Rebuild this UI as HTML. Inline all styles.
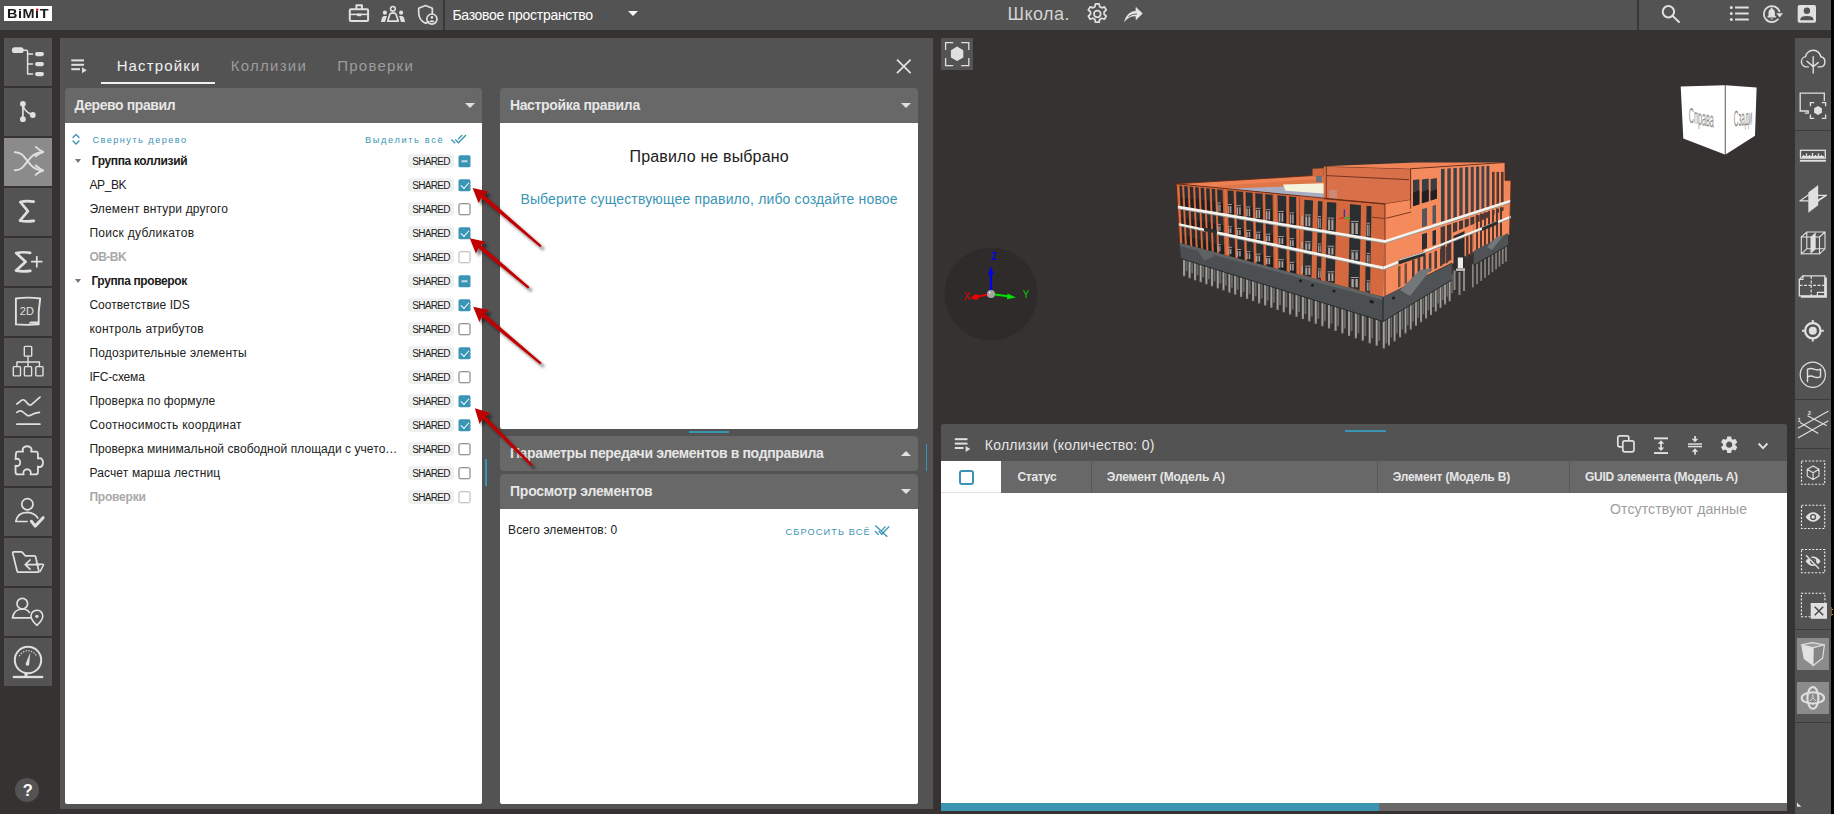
<!DOCTYPE html>
<html lang="ru">
<head>
<meta charset="utf-8">
<title>BIMIT</title>
<style>
*{box-sizing:border-box;margin:0;padding:0}
html,body{width:1834px;height:814px;overflow:hidden}
body{background:#363232;font-family:"Liberation Sans",sans-serif;color:#e0e0e0;position:relative}
.abs{position:absolute}
.t{position:absolute;white-space:nowrap;line-height:20px;left:0;top:0}
svg{position:absolute;overflow:visible}
.ic{fill:none;stroke:#e0e0e0}
.fl{fill:#e0e0e0;stroke:none}
/* top bar */
#topbar{position:absolute;left:0;top:0;width:1834px;height:30px;background:#535353}
#logo{position:absolute;left:4px;top:6px;width:48px;height:15px;background:#fff}
.vdiv{position:absolute;top:0;width:1.5px;height:30px;background:#3a3737}
/* left bar */
#leftbar .b{position:absolute;left:4px;width:48px;height:48px;background:#535353}
#leftbar .b.on{background:#8b8b8b}
#help{position:absolute;left:14.900px;top:777.900px;width:24.200px;height:24.200px;border-radius:12.100px;background:#535353}
/* main panel */
#mainpanel{position:absolute;left:60px;top:38px;width:873px;height:771px;background:#535353}
.acc{position:absolute;background:#686868;border-radius:4px 4px 0 0}
.acc.c{border-radius:4px}
.body{position:absolute;background:#fff;border-radius:0 0 2px 2px}
.caret{position:absolute;width:0;height:0;border-left:5px solid transparent;border-right:5px solid transparent;border-top:5px solid #e0e0e0}
.caret.up{border-top:none;border-bottom:5px solid #e0e0e0}
.row{position:absolute;left:0;width:417px;height:24px}
.badge{position:absolute;left:343px;top:5px;width:46px;height:14px;border-radius:4px;background:#f0f0f0}
.cb{position:absolute;left:393px;top:6px;width:12px;height:12px;transform:translate(.500px,.250px);border-radius:1.600px;border:1.5px solid #757575;background:#fff}
.cb.dis{border-color:#b5b5b5}
.cb.on,.cb.ind{border:none;background:#3a95b5}
.tw{position:absolute;left:9.700px;top:10px;width:0;height:0;border-left:3.5px solid transparent;border-right:3.5px solid transparent;border-top:4px solid #757575}
/* viewer */
#fitbtn{position:absolute;left:941px;top:38px;width:32px;height:32px;background:#535353}
/* bottom panel */
#bottompanel{position:absolute;left:941px;top:424px;width:846px;height:387px;background:#535353;border-radius:3px 3px 0 0}
#thead{position:absolute;left:60px;top:37px;width:786px;height:32px;background:#686868}
.cdiv{position:absolute;top:0;width:1px;height:32px;background:#585858}
/* right bar */
#rightbar{position:absolute;left:1795px;top:38px;width:36px;height:776px;background:#535353}
#rightedge{position:absolute;left:1831.300px;top:0;width:2.700px;height:814px;background:#000}
.hdiv{position:absolute;left:0;width:36px;height:1px;background:#3f3c3c}
.rb{position:absolute;left:2px;width:32px;height:32px;background:#8b8b8b}
.s{font-size:10px;color:#212121}
.th{font-size:12px;font-weight:bold;color:#e6e6e6}
.cb.on::after{content:"";position:absolute;left:3.700px;top:.700px;width:3.600px;height:6.800px;border:solid #fff;border-width:0 1.600px 1.600px 0;transform:rotate(42deg)}
.cb.ind::after{content:"";position:absolute;left:2.700px;top:5.100px;width:6.800px;height:1.700px;background:#c2dbe6}
#tLogo{left:7.40px;top:4.10px;transform-origin:0 0;transform:scaleX(1.0782)}
#tSpace{left:452.40px;top:5.30px;letter-spacing:-0.283px}
#tProj{left:1007.40px;top:4.40px;letter-spacing:0.496px}
#tTab1{left:56.65px;top:17.60px;letter-spacing:1.142px}
#tTab2{left:170.70px;top:17.60px;letter-spacing:1.274px}
#tTab3{left:277.20px;top:17.60px;letter-spacing:1.242px}
#tAcc1{left:14.40px;top:57.00px;letter-spacing:-0.404px}
#tAcc2{left:449.90px;top:57.00px;letter-spacing:-0.333px}
#tAcc3{left:449.90px;top:405.00px;letter-spacing:-0.349px}
#tAcc4{left:450.00px;top:443.25px;letter-spacing:-0.233px}
#tCollapse{left:27.40px;top:6.90px;letter-spacing:1.454px}
#tSelAll{left:300.00px;top:6.90px;letter-spacing:1.643px}
#tNoRule{left:569.60px;top:109.20px;letter-spacing:0.149px}
#tChoose{left:460.40px;top:150.60px;letter-spacing:0.156px}
#tTotal{left:448.10px;top:482.30px;letter-spacing:0.086px}
#tReset{left:725.60px;top:483.90px;letter-spacing:1.112px}
#tColl{left:43.80px;top:11.00px;letter-spacing:0.243px}
#h1{left:76.40px;top:42.60px;letter-spacing:-0.251px}
#h2{left:165.80px;top:42.60px;letter-spacing:-0.152px}
#h3{left:451.70px;top:42.60px;letter-spacing:-0.188px}
#h4{left:644.00px;top:42.60px;letter-spacing:-0.247px}
#tNoData{left:669.00px;top:74.75px;letter-spacing:0.141px}
#tHelp{left:22.80px;top:780.00px;letter-spacing:0.000px}
#r0{left:26.65px;top:2.00px;letter-spacing:-0.355px}
#s0{left:347.30px;top:3.00px;letter-spacing:-0.677px}
#r1{left:24.40px;top:2.00px;letter-spacing:-0.376px}
#s1{left:347.30px;top:3.00px;letter-spacing:-0.677px}
#r2{left:24.40px;top:2.00px;letter-spacing:0.185px}
#s2{left:347.30px;top:3.00px;letter-spacing:-0.677px}
#r3{left:24.40px;top:2.00px;letter-spacing:0.306px}
#s3{left:347.30px;top:3.00px;letter-spacing:-0.677px}
#r4{left:24.40px;top:2.00px;letter-spacing:-0.532px}
#s4{left:347.30px;top:3.00px;letter-spacing:-0.677px}
#r5{left:26.40px;top:2.00px;letter-spacing:-0.377px}
#s5{left:347.30px;top:3.00px;letter-spacing:-0.677px}
#r6{left:24.40px;top:2.00px;letter-spacing:0.045px}
#s6{left:347.30px;top:3.00px;letter-spacing:-0.677px}
#r7{left:24.40px;top:2.00px;letter-spacing:0.238px}
#s7{left:347.30px;top:3.00px;letter-spacing:-0.677px}
#r8{left:24.40px;top:2.00px;letter-spacing:0.199px}
#s8{left:347.30px;top:3.00px;letter-spacing:-0.677px}
#r9{left:24.40px;top:2.00px;letter-spacing:-0.162px}
#s9{left:347.30px;top:3.00px;letter-spacing:-0.677px}
#r10{left:24.40px;top:2.00px;letter-spacing:0.072px}
#s10{left:347.30px;top:3.00px;letter-spacing:-0.677px}
#r11{left:24.40px;top:2.00px;letter-spacing:0.253px}
#s11{left:347.30px;top:3.00px;letter-spacing:-0.677px}
#r12{left:24.40px;top:2.00px;letter-spacing:0.060px}
#s12{left:347.30px;top:3.00px;letter-spacing:-0.677px}
#r13{left:24.40px;top:2.00px;letter-spacing:0.142px}
#s13{left:347.30px;top:3.00px;letter-spacing:-0.677px}
#r14{left:24.40px;top:2.00px;letter-spacing:-0.199px}
#s14{left:347.30px;top:3.00px;letter-spacing:-0.677px}
</style>
</head>
<body>

<!-- ======= TOP BAR ======= -->
<header id="topbar">
  <div id="logo"></div>
  <span class="t" id="tLogo" style="font-size:13.400px;font-weight:bold;color:#1c1c1c;letter-spacing:.500px">BiMiT</span>
  <svg style="left:0;top:0" width="1834" height="30" viewBox="0 0 1834 30">
  <!-- logo red dot -->
  <rect x="36" y="8.700" width="2.300" height="2" fill="#f00000"/>
  <!-- briefcase -->
  <g class="ic" stroke-width="2" stroke-linecap="round" stroke-linejoin="round">
    <rect x="349.8" y="9.2" width="18.3" height="11.7" rx="1.2"/>
    <path d="M356.4 9V5.3h5.5V9"/>
  </g>
  <path d="M350 14.4h18" stroke="#e0e0e0" stroke-width="1.6" fill="none"/>
  <rect x="357" y="13.6" width="4.2" height="2.6" fill="#e0e0e0"/>
  <!-- people -->
  <circle cx="392.900" cy="8.800" r="2.350" class="ic" stroke-width="1.6" stroke-linecap="round" stroke-linejoin="round"/>
  <path d="M387.700 21.100l2.100-6.700q.400-1.300 1.700-1.300h2.900q1.300 0 1.700 1.300l2.100 6.700z" class="ic" stroke-width="1.7" stroke-linecap="round" stroke-linejoin="round"/>
  <circle cx="384.9" cy="12.7" r="2.1" class="fl"/>
  <circle cx="401.1" cy="12.7" r="2.1" class="fl"/>
  <path d="M380.9 21.9l1.2-4.4q.5-1.6 2.2-1.6h2.6l-1.9 6z" class="fl"/>
  <path d="M405.1 21.9l-1.2-4.4q-.5-1.6-2.200-1.600h-2.600l1.900 6z" class="fl"/>
  <!-- shield + person -->
  <path d="M428.700 21.700q-1.700 1-3.300 1.400q-6.700-2.900-6.700-10.600v-4.300l6.800-2.700 6.800 2.700v5.500" class="ic" stroke-width="1.7" stroke-linecap="round" stroke-linejoin="round"/>
  <circle cx="431.900" cy="19.100" r="5.100" class="ic" stroke-width="1.700" stroke-linecap="round" stroke-linejoin="round"/>
  <circle cx="431.900" cy="17.400" r="1.300" class="fl"/>
  <path d="M429.300 21.400q2.600-2.400 5.200 0q-2.600 1.700-5.200 0z" class="fl"/>
  <!-- gear outline -->
  <g transform="translate(1097.300 13.900) scale(1.080)">
    <path class="ic" stroke-width="1.600" d="M-1.700-9.300h3.400l.5 2.600 1.900 1.100 2.500-.9 1.700 2.900-2 1.700v2.200l2 1.700-1.700 2.900-2.500-.9-1.900 1.100-.5 2.600h-3.400l-.5-2.600-1.900-1.100-2.500.9-1.700-2.900 2-1.700v-2.200l-2-1.700 1.700-2.900 2.500.9 1.900-1.100z" stroke-linecap="round" stroke-linejoin="round"/>
    <circle r="3.100" class="ic" stroke-width="1.600" stroke-linecap="round" stroke-linejoin="round"/>
  </g>
  <!-- share arrow -->
  <path d="M1124.600 21.300q2.300-9.300 11.400-10.300v-3.600l6.400 6.100-6.400 6.200v-3.700q-6.700-.6-11.400 5.300z" fill="#e6e6e6" stroke="#e6e6e6" stroke-width=".6" stroke-linejoin="round"/>
  <path d="M1128.500 16.500q3.500-2.700 8.500-2.600" stroke="#535353" stroke-width=".9" fill="none"/>
  <!-- search -->
  <circle cx="1668.400" cy="11.700" r="5.700" class="ic" stroke-width="2" stroke-linecap="round" stroke-linejoin="round"/>
  <path d="M1672.300 15.600l6.700 6.400" class="ic" stroke-width="2" stroke-linecap="round" stroke-linejoin="round"/>
  <!-- list -->
  <g class="fl">
    <circle cx="1731.300" cy="7.600" r="1.500"/><circle cx="1731.300" cy="13.600" r="1.500"/><circle cx="1731.300" cy="19.600" r="1.500"/>
    <rect x="1735" y="6.600" width="13.800" height="2" rx=".5"/><rect x="1735" y="12.600" width="13.800" height="2" rx=".5"/><rect x="1735" y="18.600" width="13.800" height="2" rx=".5"/>
  </g>
  <!-- bell with refresh -->
  <path d="M1779.500 11.500a8 8 0 1 0-1.500 7.800" class="ic" stroke-width="1.700" stroke-linecap="round" stroke-linejoin="round"/>
  <path d="M1776.300 13.300h6.700l-3.300 4.200z" class="fl"/>
  <path d="M1767.500 17.400v-.9l1-1v-3.300q0-2.600 2.300-3.300v-.5a.9.900 0 0 1 1.800 0v.5q2.300.7 2.300 3.300v3.300l1 1v.9z" class="fl"/>
  <path d="M1770.500 18.400h2.400a1.200 1.200 0 0 1-2.400 0z" class="fl"/>
  <!-- account box -->
  <rect x="1797.700" y="5" width="18.300" height="17.800" rx="1.800" class="fl"/>
  <circle cx="1806.900" cy="10.800" r="3.200" fill="#535353"/>
  <path d="M1800.400 20.300v-1q0-3.300 6.500-3.300t6.500 3.300v1z" fill="#535353"/>
</svg>

  <div class="vdiv" style="left:443.3px"></div>
  <span class="t" id="tSpace" style="font-size:14px;color:#fff">Базовое пространство</span>
  <div class="caret" style="left:628.100px;top:11.300px;border-top-color:#f8f8f8"></div>
  <span class="t" id="tProj" style="font-size:18px;color:#d4d4d4">Школа.</span>
  <div class="vdiv" style="left:1637.2px"></div>
</header>

<!-- ======= LEFT BAR ======= -->
<nav id="leftbar">
  <div class="b" style="top:38px"></div>
  <div class="b" style="top:88px"></div>
  <div class="b on" style="top:138px"></div>
  <div class="b" style="top:188px"></div>
  <div class="b" style="top:238px"></div>
  <div class="b" style="top:288px"></div>
  <div class="b" style="top:338px"></div>
  <div class="b" style="top:388px"></div>
  <div class="b" style="top:438px"></div>
  <div class="b" style="top:488px"></div>
  <div class="b" style="top:538px"></div>
  <div class="b" style="top:588px"></div>
  <div class="b" style="top:638px"></div>
  <svg style="left:0;top:0" width="60" height="814" viewBox="0 0 60 814">
  <!-- 1 tree -->
  <rect x="11.900" y="47.300" width="11.800" height="5.800" rx="2.900" class="fl"/>
  <path d="M23 50.200h3.200q1.400 0 1.400 1.400v22.400h5.500M27.600 54h5.500M27.600 64h5.500" class="ic" stroke-width="1.500" stroke-linecap="butt" stroke-linejoin="round"/>
  <rect x="35" y="51.900" width="9" height="4.300" rx="2.100" class="fl"/>
  <rect x="35" y="61.900" width="9" height="4.300" rx="2.100" class="fl"/>
  <rect x="35" y="71.900" width="9" height="4.300" rx="2.100" class="fl"/>
  <!-- 2 branch -->
  <circle cx="22.900" cy="103.800" r="2.900" class="fl"/>
  <circle cx="22.900" cy="119.200" r="2.900" class="fl"/>
  <circle cx="32.800" cy="115" r="2.900" class="fl"/>
  <path d="M22.900 104v15M22.900 104.500q1 7 9.500 10.400" class="ic" stroke-width="1.700" stroke-linecap="round" stroke-linejoin="round"/>
  <!-- 3 shuffle -->
  <g class="ic" stroke-width="1.900" stroke-linecap="round" stroke-linejoin="round">
    <path d="M14.800 152.200c12.500-.5 12 17.800 27.500 18.200M14.800 170.300c12.500.3 12-17.700 27.500-18.100"/>
    <path d="M35.800 146.900q4 3.800 7.400 5.100q-4 .9-7.600 4.200M35.800 165.500q4 3.700 7.400 5q-4 1-7.600 4.400"/>
  </g>
  <!-- 4 sigma -->
  <path d="M33.600 201.700q-7-1.200-13.300.300l7.600 9.200-7.900 9.500q6.500 1.300 13.800.200" class="ic" stroke-width="2.700" stroke-linecap="round" stroke-linejoin="round"/>
  <!-- 5 sigma plus -->
  <path d="M30.200 252.800q-7-1.200-14 .300l9.400 8.700-9.500 8.800q6.500 1.300 14.200.200" class="ic" stroke-width="2.700" stroke-linecap="round" stroke-linejoin="round"/>
  <path d="M31.800 261.700h10M36.800 256.600v10.200" class="ic" stroke-width="1.700" stroke-linecap="round" stroke-linejoin="round"/>
  <!-- 6 2D sheet -->
  <path d="M15.900 298.500q12-1.700 24.300 0q-2.200 13-1.500 25.900q-11 .900-22.800 0z" class="ic" stroke-width="1.900" stroke-linecap="round" stroke-linejoin="round"/>
  <path d="M28.500 323.500q1-2 3-2h6.500v2.500z" class="fl"/>
  <text x="19.800" y="315" font-size="11.500" fill="#e0e0e0" font-family="Liberation Sans, sans-serif" textLength="14" lengthAdjust="spacingAndGlyphs">2D</text>
  <!-- 7 org chart -->
  <g transform="translate(0 -.800)" class="ic" stroke-width="1.400" stroke-linecap="round" stroke-linejoin="round">
    <rect x="24.300" y="347.200" width="7.400" height="9.700" rx=".8"/>
    <rect x="13.300" y="367.400" width="7.200" height="9.300" rx=".8"/>
    <rect x="24.400" y="367.400" width="7.200" height="9.300" rx=".8"/>
    <rect x="35.800" y="367.400" width="7.200" height="9.300" rx=".8"/>
    <path d="M28 357v10.300M16.900 367.300v-4.500h22.500v4.500"/>
  </g>
  <!-- 8 chart -->
  <g class="ic" stroke-width="1.700" stroke-linecap="round" stroke-linejoin="round">
    <path d="M16.900 404l4.800-3.800q1.500-1 3 .2l4 4.200q1.500 1.200 3-.2l8.300-7.300"/>
    <path d="M16.900 412.400q3-2.400 5.500-.8l4.500 3.600q1.500.9 3.200.2q4.500-2.400 9.300-3"/>
    <path d="M16.900 424.200h23"/>
  </g>
  <!-- 9 puzzle -->
  <path transform="translate(29.300 0) scale(.950 1) translate(-29.300 0)" d="M15.200 454q0-2.400 2.400-2.400h5.200q-1.200-2.600.600-4.200q1.600-1.200 3.600-1.200t3.600 1.200q1.800 1.600.600 4.200h4.800q2.400 0 2.400 2.400v4.600q2.600-1.200 4.200.600q1.200 1.600 1.200 3.400t-1.200 3.400q-1.600 1.800-4.200.600v5.400q0 2.400-2.400 2.400h-5.400q1-2.200-.400-3.800q-1.400-1.400-3.200-1.400t-3.200 1.400q-1.400 1.600-.400 3.800h-6.200q-2.400 0-2.400-2.400v-6.400q2.200 1 3.600-.200q1.300-1.200 1.300-3t-1.300-3q-1.400-1.200-3.600-.200z" class="ic" stroke-width="1.900" stroke-linecap="round" stroke-linejoin="round"/>
  <!-- 10 user check -->
  <circle cx="27.400" cy="504.200" r="5.600" class="ic" stroke-width="1.700"/>
  <path d="M27 521.500h-11.200q1.400-9 11.600-9.200q7 .300 10.400 5.700" class="ic" stroke-width="1.700" stroke-linecap="round" stroke-linejoin="round"/>
  <path d="M31.400 521.300l3.800 4.800 7.900-8.400" class="ic" stroke-width="3" stroke-linecap="round" stroke-linejoin="round"/>
  <!-- 11 folder arrow -->
  <path d="M12.700 553.100q-.200-1.200 1-1.200h7.400q.700 0 1.200.500l2.900 3.400h9.200q1 0 1.200 1l3.200 14.200q.200 1.200-1 1.200h-19.200q-1.200 0-1.500-1.200z" class="ic" stroke-width="1.700" stroke-linecap="round" stroke-linejoin="round"/>
  <path d="M35.800 564.200h6.800q1.200 0 .700 1.100l-3.200 6.200" class="ic" stroke-width="1.600" stroke-linecap="round" stroke-linejoin="round"/>
  <path d="M40 564.600h-14.600M30 560l-4.800 4.600 4.800 4.500" class="ic" stroke-width="1.700" stroke-linecap="round" stroke-linejoin="round"/>
  <!-- 12 user location -->
  <circle cx="22.300" cy="603.700" r="5.300" class="ic" stroke-width="1.700"/>
  <path d="M30.500 617.800h-18q1.300-8.600 10.200-8.800q4.200 0 6.700 3.400" class="ic" stroke-width="1.700" stroke-linecap="round" stroke-linejoin="round"/>
  <path d="M36.900 625.300q-5.900-5.300-5.900-9.300q0-2.500 1.700-4.100t4.200-1.700t4.200 1.700t1.700 4.100q0 4-5.900 9.300z" class="ic" stroke-width="1.600" stroke-linejoin="round"/>
  <circle cx="36.900" cy="616.300" r="1.600" class="fl"/>
  <!-- 13 gauge -->
  <circle cx="28" cy="660" r="13.200" class="ic" stroke-width="2"/>
  <path d="M12.800 677h30.400" class="ic" stroke-width="2.300"/>
  <path d="M26 673v4" class="ic" stroke-width="3"/>
  <path d="M19.400 656.200a9.500 9.500 0 0 1 17.200 0" class="ic" stroke-width="1.100" stroke-dasharray="1.400 1.300"/>
  <path d="M30.300 652.400l-1.100 11.800q-.400 1.700-2.100 1.500q-1.700-.500-1.300-2.300z" class="fl"/>
</svg>

  <div id="help"></div>
  <span class="t" id="tHelp" style="font-size:16.500px;font-weight:bold;color:#fff">?</span>
</nav>

<!-- ======= MAIN PANEL ======= -->
<section id="mainpanel">
  <!-- tabs -->
  <span class="t" id="tTab1" style="font-size:15px;color:#f0f0f0">Настройки</span>
  <span class="t" id="tTab2" style="font-size:15px;color:#9c9c9c">Коллизии</span>
  <span class="t" id="tTab3" style="font-size:15px;color:#9c9c9c">Проверки</span>
  <div class="abs" style="left:41px;top:44px;width:114px;height:2px;background:#f0f0f0"></div>
  <svg style="left:0;top:0" width="873" height="60" viewBox="60 38 873 60">
  <!-- menu icon -->
  <g class="fl">
    <rect x="71.300" y="59.400" width="12.700" height="2"/><rect x="71.300" y="63.800" width="12.700" height="2"/><rect x="71.300" y="68.200" width="8.700" height="2"/>
    <path d="M82 67.200l4.700 3-4.700 3z"/>
  </g>
  <!-- close -->
  <path d="M897 59.700l13.600 13.400M910.600 59.700l-13.600 13.400" class="ic" stroke-width="1.800" stroke-linecap="butt" stroke-linejoin="round"/>
</svg>


  <!-- rule tree -->
  <div class="acc" style="left:5px;top:50px;width:417px;height:35px"></div>
  <span class="t" id="tAcc1" style="font-size:14px;font-weight:bold;color:#e6e6e6">Дерево правил</span>
  <div class="caret" style="left:405px;top:65px"></div>
  <div class="body" id="tree" style="left:5px;top:85px;width:417px;height:681px">
    <span class="t" id="tCollapse" style="font-size:9.200px;color:#3a95b5">Свернуть дерево</span>
    <span class="t" id="tSelAll" style="font-size:9.200px;color:#3a95b5">Выделить всё</span>
    <svg style="left:0;top:0" width="417" height="30" viewBox="65 123 417 30">
  <path d="M73 137.600l3-3 3 3M73 141.100l3 3 3-3" fill="none" stroke="#3a95b5" stroke-width="1.400" stroke-linecap="round" stroke-linejoin="round"/>
  <g transform="translate(450.700 130.800) scale(.667 .680)" fill="#3a95b5">
    <path d="M18 7l-1.410-1.410-6.340 6.340 1.410 1.410L18 7zm4.240-1.410L11.660 16.170 7.480 12l-1.410 1.410L11.660 19l12-12-1.420-1.410zM.410 13.410L6 19l1.410-1.410L1.830 12 .410 13.410z"/>
  </g>
</svg>

    <div class="row" style="top:26px"><i class="tw"></i><span class="t" id="r0" style="font-size:12px;font-weight:bold;color:#1a1a1a">Группа коллизий</span><i class="badge"></i><span class="t s" id="s0">SHARED</span><i class="cb ind"></i></div>
    <div class="row" style="top:50px"><span class="t" id="r1" style="font-size:12px;color:#212121">AP_BK</span><i class="badge"></i><span class="t s" id="s1">SHARED</span><i class="cb on"></i></div>
    <div class="row" style="top:74px"><span class="t" id="r2" style="font-size:12px;color:#212121">Элемент внтури другого</span><i class="badge"></i><span class="t s" id="s2">SHARED</span><i class="cb"></i></div>
    <div class="row" style="top:98px"><span class="t" id="r3" style="font-size:12px;color:#212121">Поиск дубликатов</span><i class="badge"></i><span class="t s" id="s3">SHARED</span><i class="cb on"></i></div>
    <div class="row" style="top:122px"><span class="t" id="r4" style="font-size:12px;font-weight:bold;color:#a8a8a8">OB-BK</span><i class="badge"></i><span class="t s" id="s4">SHARED</span><i class="cb dis"></i></div>
    <div class="row" style="top:146px"><i class="tw"></i><span class="t" id="r5" style="font-size:12px;font-weight:bold;color:#1a1a1a">Группа проверок</span><i class="badge"></i><span class="t s" id="s5">SHARED</span><i class="cb ind"></i></div>
    <div class="row" style="top:170px"><span class="t" id="r6" style="font-size:12px;color:#212121">Соответствие IDS</span><i class="badge"></i><span class="t s" id="s6">SHARED</span><i class="cb on"></i></div>
    <div class="row" style="top:194px"><span class="t" id="r7" style="font-size:12px;color:#212121">контроль атрибутов</span><i class="badge"></i><span class="t s" id="s7">SHARED</span><i class="cb"></i></div>
    <div class="row" style="top:218px"><span class="t" id="r8" style="font-size:12px;color:#212121">Подозрительные элементы</span><i class="badge"></i><span class="t s" id="s8">SHARED</span><i class="cb on"></i></div>
    <div class="row" style="top:242px"><span class="t" id="r9" style="font-size:12px;color:#212121">IFC-схема</span><i class="badge"></i><span class="t s" id="s9">SHARED</span><i class="cb"></i></div>
    <div class="row" style="top:266px"><span class="t" id="r10" style="font-size:12px;color:#212121">Проверка по формуле</span><i class="badge"></i><span class="t s" id="s10">SHARED</span><i class="cb on"></i></div>
    <div class="row" style="top:290px"><span class="t" id="r11" style="font-size:12px;color:#212121">Соотносимость координат</span><i class="badge"></i><span class="t s" id="s11">SHARED</span><i class="cb on"></i></div>
    <div class="row" style="top:314px"><span class="t" id="r12" style="font-size:12px;color:#212121">Проверка минимальной свободной площади с учето…</span><i class="badge"></i><span class="t s" id="s12">SHARED</span><i class="cb"></i></div>
    <div class="row" style="top:338px"><span class="t" id="r13" style="font-size:12px;color:#212121">Расчет марша лестниц</span><i class="badge"></i><span class="t s" id="s13">SHARED</span><i class="cb"></i></div>
    <div class="row" style="top:362px"><span class="t" id="r14" style="font-size:12px;font-weight:bold;color:#a8a8a8">Проверки</span><i class="badge"></i><span class="t s" id="s14">SHARED</span><i class="cb dis"></i></div>
  </div>

  <!-- rule settings -->
  <div class="acc" style="left:440px;top:50px;width:418px;height:35px"></div>
  <span class="t" id="tAcc2" style="font-size:14px;font-weight:bold;color:#e6e6e6">Настройка правила</span>
  <div class="caret" style="left:841px;top:65px"></div>
  <div class="body" style="left:440px;top:85px;width:418px;height:306px"></div>
  <span class="t" id="tNoRule" style="font-size:16px;color:#212121">Правило не выбрано</span>
  <span class="t" id="tChoose" style="font-size:14px;color:#3a95b5">Выберите существующее правило, либо создайте новое</span>
  <div class="abs" style="left:629px;top:393px;width:40px;height:2px;background:#3a95b5"></div>
  <div class="abs" style="left:425px;top:421px;width:2px;height:27px;background:#3a95b5"></div>
  <div class="abs" style="left:866.300px;top:406px;width:1.200px;height:27px;background:#3a95b5"></div>

  <div class="acc c" style="left:440px;top:398px;width:418px;height:35px"></div>
  <span class="t" id="tAcc3" style="font-size:14px;font-weight:bold;color:#e6e6e6">Параметры передачи элементов в подправила</span>
  <div class="caret up" style="left:841px;top:413px"></div>

  <div class="acc" style="left:440px;top:436px;width:418px;height:35px"></div>
  <span class="t" id="tAcc4" style="font-size:14px;font-weight:bold;color:#e6e6e6">Просмотр элементов</span>
  <div class="caret" style="left:841px;top:451px"></div>
  <div class="body" style="left:440px;top:471px;width:418px;height:295px"></div>
  <span class="t" id="tTotal" style="font-size:12px;color:#212121">Всего элементов: 0</span>
  <span class="t" id="tReset" style="font-size:9.200px;color:#3a95b5">СБРОСИТЬ ВСЁ</span>
  <svg style="left:0;top:0" width="873" height="771" viewBox="60 38 873 771"><g transform="translate(874.200 522.300) scale(.650 .680)" fill="#3a95b5"><path d="M18 7l-1.410-1.410-6.340 6.340 1.410 1.410L18 7zm4.240-1.410L11.660 16.170 7.480 12l-1.410 1.410L11.660 19l12-12-1.420-1.410zM.410 13.410L6 19l1.410-1.410L1.830 12 .410 13.410z"/></g><path d="M875.300 525.600l12 11.200" stroke="#3a95b5" stroke-width="1.300" fill="none"/></svg>
</section>

<!-- ======= 3D VIEWER ======= -->
<section id="viewer">
  <div id="fitbtn"></div>
  <svg style="left:0;top:0" width="1834" height="430" viewBox="0 0 1834 430">
<g class="ic" stroke-width="1.300"><path d="M945.600 50v-7.400h7.600M961.200 42.600h7.600v7.400M968.800 58v7.600h-7.600M953.200 65.600h-7.600v-7.600"/></g>
<path d="M957.100 46.600l6.200 3.600v7.200l-6.200 3.600-6.200-3.600v-7.200z" class="fl"/>
<circle cx="991" cy="294" r="46.500" fill="#2f2b2b"/>
<path d="M991 294l-19 3.700" stroke="#f00000" stroke-width="1.800"/><circle cx="975.900" cy="296.900" r="2.700" fill="#f00000"/><path d="M970.500 297.900l4-2.400v4z" fill="#f00000"/>
<path d="M991 294l17 2.300" stroke="#00e000" stroke-width="2"/><path d="M1016 297.400l-8.500-3.800-.600 5.600z" fill="#00e000"/>
<path d="M991 294v-20" stroke="#0000f5" stroke-width="2.200"/><path d="M991 266.400l2.900 8h-5.800z" fill="#0000f5"/>
<circle cx="991" cy="294" r="4" fill="#a4a4a4"/><circle cx="989.800" cy="292.600" r=".900" fill="#f5f5e0"/>
<text x="991.500" y="260.400" font-size="10" font-weight="bold" fill="#0000f5" font-family="Liberation Sans, sans-serif" textLength="5" lengthAdjust="spacingAndGlyphs">Z</text>
<text x="1022.700" y="298" font-size="10" fill="#00d000" font-family="Liberation Sans, sans-serif" textLength="6.500" lengthAdjust="spacingAndGlyphs">Y</text>
<text x="964" y="299.500" font-size="10.500" fill="#f00000" font-family="Liberation Sans, sans-serif" textLength="6" lengthAdjust="spacingAndGlyphs">X</text>
<path d="M1680.700 86.600l44.100-1.400v69.200l-41.500-15.800z" fill="#fff"/>
<path d="M1725.600 85.200l31 2.200-1.600 48.400-29.400 18.600z" fill="#fff"/>
<text transform="translate(1688.800 122.600) matrix(.335 .066 0 1 0 0)" font-size="21.500" fill="#8c8c8c" font-family="Liberation Sans, sans-serif">Справа</text>
<text transform="translate(1733.800 126.600) matrix(.285 -.034 0 1 0 0)" font-size="22.500" fill="#8c8c8c" font-family="Liberation Sans, sans-serif">Сзади</text>
<rect x="1185.7" y="253.2" width="1.800" height="18.0" fill="#6a6a68"/>
<rect x="1183.0" y="257.2" width="2.200" height="19.0" fill="#8e8e8a"/>
<rect x="1183.6" y="257.2" width=".800" height="17.0" fill="#adada6"/>
<rect x="1191.2" y="254.9" width="1.800" height="18.3" fill="#6a6a68"/>
<rect x="1188.5" y="258.9" width="2.200" height="19.3" fill="#8e8e8a"/>
<rect x="1189.1" y="258.9" width=".800" height="17.3" fill="#adada6"/>
<rect x="1196.7" y="256.7" width="1.800" height="18.6" fill="#6a6a68"/>
<rect x="1194.0" y="260.7" width="2.200" height="19.6" fill="#8e8e8a"/>
<rect x="1194.6" y="260.7" width=".800" height="17.6" fill="#adada6"/>
<rect x="1202.3" y="258.4" width="1.800" height="18.8" fill="#6a6a68"/>
<rect x="1199.6" y="262.4" width="2.200" height="19.8" fill="#8e8e8a"/>
<rect x="1200.2" y="262.4" width=".800" height="17.8" fill="#adada6"/>
<rect x="1208.0" y="260.2" width="1.800" height="19.1" fill="#6a6a68"/>
<rect x="1205.3" y="264.2" width="2.200" height="20.1" fill="#8e8e8a"/>
<rect x="1205.9" y="264.2" width=".800" height="18.1" fill="#adada6"/>
<rect x="1213.6" y="261.9" width="1.800" height="19.4" fill="#6a6a68"/>
<rect x="1210.9" y="265.9" width="2.200" height="20.4" fill="#8e8e8a"/>
<rect x="1211.5" y="265.9" width=".800" height="18.4" fill="#adada6"/>
<rect x="1219.4" y="263.7" width="1.800" height="19.7" fill="#6a6a68"/>
<rect x="1216.7" y="267.7" width="2.200" height="20.7" fill="#8e8e8a"/>
<rect x="1217.3" y="267.7" width=".800" height="18.7" fill="#adada6"/>
<rect x="1225.1" y="265.5" width="1.800" height="20.0" fill="#6a6a68"/>
<rect x="1222.4" y="269.5" width="2.200" height="21.0" fill="#8e8e8a"/>
<rect x="1223.0" y="269.5" width=".800" height="19.0" fill="#adada6"/>
<rect x="1231.0" y="267.3" width="1.800" height="20.3" fill="#6a6a68"/>
<rect x="1228.3" y="271.3" width="2.200" height="21.3" fill="#8e8e8a"/>
<rect x="1228.9" y="271.3" width=".800" height="19.3" fill="#adada6"/>
<rect x="1236.8" y="269.1" width="1.800" height="20.6" fill="#6a6a68"/>
<rect x="1234.1" y="273.1" width="2.200" height="21.6" fill="#8e8e8a"/>
<rect x="1234.7" y="273.1" width=".800" height="19.6" fill="#adada6"/>
<rect x="1242.7" y="271.0" width="1.800" height="20.9" fill="#6a6a68"/>
<rect x="1240.0" y="275.0" width="2.200" height="21.9" fill="#8e8e8a"/>
<rect x="1240.6" y="275.0" width=".800" height="19.9" fill="#adada6"/>
<rect x="1248.7" y="272.8" width="1.800" height="21.1" fill="#6a6a68"/>
<rect x="1246.0" y="276.8" width="2.200" height="22.1" fill="#8e8e8a"/>
<rect x="1246.6" y="276.8" width=".800" height="20.1" fill="#adada6"/>
<rect x="1254.7" y="274.7" width="1.800" height="21.4" fill="#6a6a68"/>
<rect x="1252.0" y="278.7" width="2.200" height="22.4" fill="#8e8e8a"/>
<rect x="1252.6" y="278.7" width=".800" height="20.4" fill="#adada6"/>
<rect x="1260.7" y="276.6" width="1.800" height="21.8" fill="#6a6a68"/>
<rect x="1258.0" y="280.6" width="2.200" height="22.8" fill="#8e8e8a"/>
<rect x="1258.6" y="280.6" width=".800" height="20.8" fill="#adada6"/>
<rect x="1266.8" y="278.5" width="1.800" height="22.1" fill="#6a6a68"/>
<rect x="1264.1" y="282.5" width="2.200" height="23.1" fill="#8e8e8a"/>
<rect x="1264.7" y="282.5" width=".800" height="21.1" fill="#adada6"/>
<rect x="1273.0" y="280.4" width="1.800" height="22.4" fill="#6a6a68"/>
<rect x="1270.3" y="284.4" width="2.200" height="23.4" fill="#8e8e8a"/>
<rect x="1270.9" y="284.4" width=".800" height="21.4" fill="#adada6"/>
<rect x="1279.2" y="282.3" width="1.800" height="22.7" fill="#6a6a68"/>
<rect x="1276.5" y="286.3" width="2.200" height="23.7" fill="#8e8e8a"/>
<rect x="1277.1" y="286.3" width=".800" height="21.7" fill="#adada6"/>
<rect x="1285.4" y="284.3" width="1.800" height="23.0" fill="#6a6a68"/>
<rect x="1282.7" y="288.3" width="2.200" height="24.0" fill="#8e8e8a"/>
<rect x="1283.3" y="288.3" width=".800" height="22.0" fill="#adada6"/>
<rect x="1291.7" y="286.2" width="1.800" height="23.3" fill="#6a6a68"/>
<rect x="1289.0" y="290.2" width="2.200" height="24.3" fill="#8e8e8a"/>
<rect x="1289.6" y="290.2" width=".800" height="22.3" fill="#adada6"/>
<rect x="1298.1" y="288.2" width="1.800" height="23.6" fill="#6a6a68"/>
<rect x="1295.4" y="292.2" width="2.200" height="24.6" fill="#8e8e8a"/>
<rect x="1296.0" y="292.2" width=".800" height="22.6" fill="#adada6"/>
<rect x="1304.5" y="290.2" width="1.800" height="23.9" fill="#6a6a68"/>
<rect x="1301.8" y="294.2" width="2.200" height="24.9" fill="#8e8e8a"/>
<rect x="1302.4" y="294.2" width=".800" height="22.9" fill="#adada6"/>
<rect x="1310.9" y="292.2" width="1.800" height="24.3" fill="#6a6a68"/>
<rect x="1308.2" y="296.2" width="2.200" height="25.3" fill="#8e8e8a"/>
<rect x="1308.8" y="296.2" width=".800" height="23.3" fill="#adada6"/>
<rect x="1317.4" y="294.2" width="1.800" height="24.6" fill="#6a6a68"/>
<rect x="1314.7" y="298.2" width="2.200" height="25.6" fill="#8e8e8a"/>
<rect x="1315.3" y="298.2" width=".800" height="23.6" fill="#adada6"/>
<rect x="1324.0" y="296.3" width="1.800" height="24.9" fill="#6a6a68"/>
<rect x="1321.3" y="300.3" width="2.200" height="25.9" fill="#8e8e8a"/>
<rect x="1321.9" y="300.3" width=".800" height="23.9" fill="#adada6"/>
<rect x="1330.6" y="298.3" width="1.800" height="25.2" fill="#6a6a68"/>
<rect x="1327.9" y="302.3" width="2.200" height="26.2" fill="#8e8e8a"/>
<rect x="1328.5" y="302.3" width=".800" height="24.2" fill="#adada6"/>
<rect x="1337.2" y="300.4" width="1.800" height="25.6" fill="#6a6a68"/>
<rect x="1334.5" y="304.4" width="2.200" height="26.6" fill="#8e8e8a"/>
<rect x="1335.1" y="304.4" width=".800" height="24.6" fill="#adada6"/>
<rect x="1344.0" y="302.5" width="1.800" height="25.9" fill="#6a6a68"/>
<rect x="1341.3" y="306.5" width="2.200" height="26.9" fill="#8e8e8a"/>
<rect x="1341.9" y="306.5" width=".800" height="24.9" fill="#adada6"/>
<rect x="1350.7" y="304.6" width="1.800" height="26.3" fill="#6a6a68"/>
<rect x="1348.0" y="308.6" width="2.200" height="27.3" fill="#8e8e8a"/>
<rect x="1348.6" y="308.6" width=".800" height="25.3" fill="#adada6"/>
<rect x="1357.5" y="306.7" width="1.800" height="26.6" fill="#6a6a68"/>
<rect x="1354.8" y="310.7" width="2.200" height="27.6" fill="#8e8e8a"/>
<rect x="1355.4" y="310.7" width=".800" height="25.6" fill="#adada6"/>
<rect x="1364.4" y="308.9" width="1.800" height="26.9" fill="#6a6a68"/>
<rect x="1361.7" y="312.9" width="2.200" height="27.9" fill="#8e8e8a"/>
<rect x="1362.3" y="312.9" width=".800" height="25.9" fill="#adada6"/>
<rect x="1371.3" y="311.0" width="1.800" height="27.3" fill="#6a6a68"/>
<rect x="1368.6" y="315.0" width="2.200" height="28.3" fill="#8e8e8a"/>
<rect x="1369.2" y="315.0" width=".800" height="26.3" fill="#adada6"/>
<rect x="1378.3" y="313.2" width="1.800" height="27.6" fill="#6a6a68"/>
<rect x="1375.6" y="317.2" width="2.200" height="28.6" fill="#8e8e8a"/>
<rect x="1376.2" y="317.2" width=".800" height="26.6" fill="#adada6"/>
<rect x="1385.4" y="315.4" width="1.800" height="28.0" fill="#6a6a68"/>
<rect x="1382.7" y="319.4" width="2.200" height="29.0" fill="#8e8e8a"/>
<rect x="1383.3" y="319.4" width=".800" height="27.0" fill="#adada6"/>
<rect x="1390.5" y="310.5" width="1.600" height="27.0" fill="#6a6a68"/>
<rect x="1388.0" y="316.5" width="2" height="29.0" fill="#8e8e8a"/>
<rect x="1388.5" y="316.5" width=".700" height="27.0" fill="#adada6"/>
<rect x="1396.1" y="307.1" width="1.600" height="26.3" fill="#6a6a68"/>
<rect x="1393.6" y="313.1" width="2" height="28.3" fill="#8e8e8a"/>
<rect x="1394.1" y="313.1" width=".700" height="26.3" fill="#adada6"/>
<rect x="1401.6" y="303.8" width="1.600" height="25.6" fill="#6a6a68"/>
<rect x="1399.1" y="309.8" width="2" height="27.6" fill="#8e8e8a"/>
<rect x="1399.6" y="309.8" width=".700" height="25.6" fill="#adada6"/>
<rect x="1407.0" y="300.5" width="1.600" height="24.9" fill="#6a6a68"/>
<rect x="1404.5" y="306.5" width="2" height="26.9" fill="#8e8e8a"/>
<rect x="1405.0" y="306.5" width=".700" height="24.9" fill="#adada6"/>
<rect x="1412.3" y="297.3" width="1.600" height="24.3" fill="#6a6a68"/>
<rect x="1409.8" y="303.3" width="2" height="26.3" fill="#8e8e8a"/>
<rect x="1410.3" y="303.3" width=".700" height="24.3" fill="#adada6"/>
<rect x="1417.5" y="294.2" width="1.600" height="23.6" fill="#6a6a68"/>
<rect x="1415.0" y="300.2" width="2" height="25.6" fill="#8e8e8a"/>
<rect x="1415.5" y="300.2" width=".700" height="23.6" fill="#adada6"/>
<rect x="1422.6" y="291.1" width="1.600" height="23.0" fill="#6a6a68"/>
<rect x="1420.1" y="297.1" width="2" height="25.0" fill="#8e8e8a"/>
<rect x="1420.6" y="297.1" width=".700" height="23.0" fill="#adada6"/>
<rect x="1427.6" y="288.1" width="1.600" height="22.4" fill="#6a6a68"/>
<rect x="1425.1" y="294.1" width="2" height="24.4" fill="#8e8e8a"/>
<rect x="1425.6" y="294.1" width=".700" height="22.4" fill="#adada6"/>
<rect x="1432.5" y="285.2" width="1.600" height="21.8" fill="#6a6a68"/>
<rect x="1430.0" y="291.2" width="2" height="23.8" fill="#8e8e8a"/>
<rect x="1430.5" y="291.2" width=".700" height="21.8" fill="#adada6"/>
<rect x="1437.3" y="282.3" width="1.600" height="21.2" fill="#6a6a68"/>
<rect x="1434.8" y="288.3" width="2" height="23.2" fill="#8e8e8a"/>
<rect x="1435.3" y="288.3" width=".700" height="21.2" fill="#adada6"/>
<rect x="1442.0" y="279.4" width="1.600" height="20.6" fill="#6a6a68"/>
<rect x="1439.5" y="285.4" width="2" height="22.6" fill="#8e8e8a"/>
<rect x="1440.0" y="285.4" width=".700" height="20.6" fill="#adada6"/>
<rect x="1446.6" y="276.6" width="1.600" height="20.0" fill="#6a6a68"/>
<rect x="1444.1" y="282.6" width="2" height="22.0" fill="#8e8e8a"/>
<rect x="1444.6" y="282.6" width=".700" height="20.0" fill="#adada6"/>
<rect x="1451.2" y="273.9" width="1.600" height="19.4" fill="#6a6a68"/>
<rect x="1448.7" y="279.9" width="2" height="21.4" fill="#8e8e8a"/>
<rect x="1449.2" y="279.9" width=".700" height="19.4" fill="#adada6"/>
<rect x="1453.5" y="268.0" width="2" height="22.0" fill="#8a8a85"/>
<rect x="1458.5" y="272.0" width="2" height="23.0" fill="#8a8a85"/>
<rect x="1463.0" y="268.0" width="2" height="23.0" fill="#8a8a85"/>
<rect x="1472.0" y="264.3" width="1.700" height="23.0" fill="#85857f"/>
<rect x="1476.2" y="261.9" width="1.700" height="22.2" fill="#85857f"/>
<rect x="1480.3" y="259.5" width="1.700" height="21.4" fill="#85857f"/>
<rect x="1484.2" y="257.2" width="1.700" height="20.6" fill="#85857f"/>
<rect x="1488.0" y="255.0" width="1.700" height="19.9" fill="#85857f"/>
<rect x="1491.6" y="252.9" width="1.700" height="19.2" fill="#85857f"/>
<rect x="1495.2" y="250.8" width="1.700" height="18.5" fill="#85857f"/>
<rect x="1498.6" y="248.8" width="1.700" height="17.8" fill="#85857f"/>
<rect x="1501.9" y="246.8" width="1.700" height="17.2" fill="#85857f"/>
<rect x="1505.1" y="245.0" width="1.700" height="16.6" fill="#85857f"/>
<polygon points="1176.0,183.8 1312.5,175.6 1323.7,176.0 1323.7,199.0" fill="#ee8154"/>
<polygon points="1205.0,186.7 1312.0,179.5 1323.7,181.0 1323.7,199.0" fill="#df7648"/>
<polygon points="1228.0,188.8 1285.0,186.6 1323.7,190.5 1323.7,198.4" fill="#a9adc2"/>
<polygon points="1283.0,184.6 1323.7,183.2 1323.7,193.6 1285.5,190.8" fill="#f6f3dd"/>
<polygon points="1312.5,168.8 1323.7,168.3 1323.7,177.0 1312.5,176.5" fill="#d4693f"/>
<rect x="1316" y="176" width="6" height="6" fill="#6b7280"/>
<polygon points="1176.0,183.8 1300.0,195.8 1300.0,275.0 1179.7,243.0" fill="#2b2e31"/>
<polygon points="1300.0,195.8 1385.0,204.0 1383.0,297.0 1300.0,275.0" fill="#d4693f"/>
<polygon points="1176.0,183.8 1300.0,195.8 1300.0,197.4 1176.0,185.2" fill="#d4693f"/>
<polygon points="1179.0,196.8 1300.0,213.1 1300.0,227.2 1179.0,207.1" fill="#1d1f22"/>
<polygon points="1179.0,216.8 1300.0,239.9 1300.0,250.3 1179.0,224.6" fill="#1d1f22"/>
<polygon points="1179.0,234.6 1300.0,263.9 1300.0,275.0 1179.0,242.8" fill="#1d1f22"/>
<polygon points="1176.5,183.8 1179.5,184.1 1182.4,243.7 1179.4,242.9" fill="#c65c33"/>
<polygon points="1177.4,183.8 1178.8,184.1 1181.7,243.7 1180.3,242.9" fill="#dd7246"/>
<polygon points="1182.0,184.4 1184.1,184.6 1186.9,244.9 1184.8,244.4" fill="#c65c33"/>
<polygon points="1182.6,184.4 1183.6,184.6 1186.4,244.9 1185.5,244.4" fill="#dd7246"/>
<polygon points="1187.5,184.9 1189.6,185.1 1192.3,246.3 1190.2,245.8" fill="#c65c33"/>
<polygon points="1188.1,184.9 1189.1,185.1 1191.8,246.3 1190.8,245.8" fill="#dd7246"/>
<polygon points="1193.0,185.4 1195.1,185.6 1197.7,247.8 1195.6,247.2" fill="#c65c33"/>
<polygon points="1193.6,185.4 1194.6,185.6 1197.2,247.8 1196.2,247.2" fill="#dd7246"/>
<polygon points="1198.5,186.0 1200.6,186.2 1203.1,249.2 1201.0,248.6" fill="#c65c33"/>
<polygon points="1199.1,186.0 1200.1,186.2 1202.5,249.2 1201.6,248.6" fill="#dd7246"/>
<polygon points="1204.0,186.5 1206.1,186.7 1208.4,250.6 1206.3,250.1" fill="#c65c33"/>
<polygon points="1204.6,186.5 1205.6,186.7 1207.9,250.6 1207.0,250.1" fill="#dd7246"/>
<polygon points="1209.5,187.0 1211.6,187.2 1213.8,252.1 1211.7,251.5" fill="#c65c33"/>
<polygon points="1210.1,187.0 1211.1,187.2 1213.3,252.1 1212.4,251.5" fill="#dd7246"/>
<polygon points="1215.0,187.6 1217.1,187.8 1219.2,253.5 1217.1,252.9" fill="#c65c33"/>
<polygon points="1215.6,187.6 1216.6,187.8 1218.7,253.5 1217.7,252.9" fill="#dd7246"/>
<polygon points="1222.5,188.3 1227.7,188.8 1229.6,256.3 1224.4,254.9" fill="#c65c33"/>
<polygon points="1224.1,188.3 1226.4,188.8 1228.3,256.3 1226.0,254.9" fill="#dd7246"/>
<polygon points="1233.5,189.4 1236.1,189.6 1237.8,258.4 1235.2,257.7" fill="#c65c33"/>
<polygon points="1234.3,189.4 1235.5,189.6 1237.2,258.4 1236.0,257.7" fill="#dd7246"/>
<polygon points="1243.0,190.3 1245.6,190.5 1247.1,260.9 1244.5,260.2" fill="#c65c33"/>
<polygon points="1243.8,190.3 1245.0,190.5 1246.4,260.9 1245.3,260.2" fill="#dd7246"/>
<polygon points="1252.5,191.2 1255.3,191.5 1256.6,263.4 1253.8,262.7" fill="#c65c33"/>
<polygon points="1253.3,191.2 1254.6,191.5 1255.9,263.4 1254.6,262.7" fill="#dd7246"/>
<polygon points="1262.5,192.2 1265.3,192.4 1266.4,266.0 1263.6,265.3" fill="#c65c33"/>
<polygon points="1263.3,192.2 1264.6,192.4 1265.7,266.0 1264.4,265.3" fill="#dd7246"/>
<polygon points="1272.5,193.1 1277.7,193.6 1278.6,269.3 1273.4,267.9" fill="#c65c33"/>
<polygon points="1274.1,193.1 1276.4,193.6 1277.3,269.3 1274.9,267.9" fill="#dd7246"/>
<polygon points="1286.0,194.4 1289.2,194.7 1289.8,272.2 1286.6,271.4" fill="#c65c33"/>
<polygon points="1287.0,194.4 1288.4,194.7 1289.0,272.2 1287.5,271.4" fill="#dd7246"/>
<polygon points="1296.0,195.4 1299.6,195.7 1299.9,274.9 1296.3,274.0" fill="#c65c33"/>
<polygon points="1297.1,195.4 1298.7,195.7 1299.0,274.9 1297.4,274.0" fill="#dd7246"/>
<polygon points="1304.4,199.7 1313.0,200.5 1311.5,277.4 1302.9,275.1" fill="#2b2e31"/>
<polygon points="1318.0,201.0 1322.5,201.5 1321.0,279.9 1316.5,278.7" fill="#2b2e31"/>
<polygon points="1327.0,201.9 1336.3,202.8 1334.8,283.6 1325.5,281.1" fill="#2b2e31"/>
<polygon points="1350.0,204.1 1361.0,205.2 1359.5,290.2 1348.5,287.2" fill="#2b2e31"/>
<polygon points="1366.6,205.7 1371.5,206.2 1370.0,292.9 1365.1,291.6" fill="#2b2e31"/>
<rect x="1217.4" y="204.5" width="1.2" height="7.0" fill="#ac9f9c"/>
<rect x="1219.3" y="204.5" width="1.2" height="7.0" fill="#ac9f9c"/>
<rect x="1217.1" y="202.5" width="3.8" height="1" fill="#a79c9a"/>
<rect x="1217.4" y="226.2" width="1.2" height="4.6" fill="#ac9f9c"/>
<rect x="1219.3" y="226.2" width="1.2" height="4.6" fill="#ac9f9c"/>
<rect x="1217.1" y="224.2" width="3.8" height="1" fill="#a79c9a"/>
<rect x="1217.4" y="246.2" width="1.2" height="5.1" fill="#ac9f9c"/>
<rect x="1219.3" y="246.2" width="1.2" height="5.1" fill="#ac9f9c"/>
<rect x="1217.1" y="244.2" width="3.8" height="1" fill="#a79c9a"/>
<rect x="1228.1" y="206.0" width="1.3" height="7.3" fill="#ac9f9c"/>
<rect x="1230.1" y="206.0" width="1.3" height="7.3" fill="#ac9f9c"/>
<rect x="1227.8" y="204.0" width="4.1" height="1" fill="#a79c9a"/>
<rect x="1228.1" y="228.3" width="1.3" height="4.8" fill="#ac9f9c"/>
<rect x="1230.1" y="228.3" width="1.3" height="4.8" fill="#ac9f9c"/>
<rect x="1227.8" y="226.3" width="4.1" height="1" fill="#a79c9a"/>
<rect x="1228.1" y="248.8" width="1.3" height="5.3" fill="#ac9f9c"/>
<rect x="1230.1" y="248.8" width="1.3" height="5.3" fill="#ac9f9c"/>
<rect x="1227.8" y="246.8" width="4.1" height="1" fill="#a79c9a"/>
<rect x="1236.7" y="207.2" width="1.5" height="7.6" fill="#ac9f9c"/>
<rect x="1239.2" y="207.2" width="1.5" height="7.6" fill="#ac9f9c"/>
<rect x="1236.3" y="205.2" width="4.8" height="1" fill="#a79c9a"/>
<rect x="1236.7" y="230.0" width="1.5" height="5.0" fill="#ac9f9c"/>
<rect x="1239.2" y="230.0" width="1.5" height="5.0" fill="#ac9f9c"/>
<rect x="1236.3" y="228.0" width="4.8" height="1" fill="#a79c9a"/>
<rect x="1236.7" y="251.0" width="1.5" height="5.5" fill="#ac9f9c"/>
<rect x="1239.2" y="251.0" width="1.5" height="5.5" fill="#ac9f9c"/>
<rect x="1236.3" y="249.0" width="4.8" height="1" fill="#a79c9a"/>
<rect x="1246.2" y="208.5" width="1.5" height="7.9" fill="#ac9f9c"/>
<rect x="1248.7" y="208.5" width="1.5" height="7.9" fill="#ac9f9c"/>
<rect x="1245.8" y="206.5" width="4.8" height="1" fill="#a79c9a"/>
<rect x="1246.2" y="231.9" width="1.5" height="5.2" fill="#ac9f9c"/>
<rect x="1248.7" y="231.9" width="1.5" height="5.2" fill="#ac9f9c"/>
<rect x="1245.8" y="229.9" width="4.8" height="1" fill="#a79c9a"/>
<rect x="1246.2" y="253.3" width="1.5" height="5.8" fill="#ac9f9c"/>
<rect x="1248.7" y="253.3" width="1.5" height="5.8" fill="#ac9f9c"/>
<rect x="1245.8" y="251.3" width="4.8" height="1" fill="#a79c9a"/>
<rect x="1255.9" y="209.8" width="1.6" height="8.2" fill="#ac9f9c"/>
<rect x="1258.5" y="209.8" width="1.6" height="8.2" fill="#ac9f9c"/>
<rect x="1255.6" y="207.8" width="5.0" height="1" fill="#a79c9a"/>
<rect x="1255.9" y="233.7" width="1.6" height="5.4" fill="#ac9f9c"/>
<rect x="1258.5" y="233.7" width="1.6" height="5.4" fill="#ac9f9c"/>
<rect x="1255.6" y="231.7" width="5.0" height="1" fill="#a79c9a"/>
<rect x="1255.9" y="255.6" width="1.6" height="6.0" fill="#ac9f9c"/>
<rect x="1258.5" y="255.6" width="1.6" height="6.0" fill="#ac9f9c"/>
<rect x="1255.6" y="253.6" width="5.0" height="1" fill="#a79c9a"/>
<rect x="1265.9" y="211.2" width="1.6" height="8.5" fill="#ac9f9c"/>
<rect x="1268.5" y="211.2" width="1.6" height="8.5" fill="#ac9f9c"/>
<rect x="1265.6" y="209.2" width="5.0" height="1" fill="#a79c9a"/>
<rect x="1265.9" y="235.7" width="1.6" height="5.6" fill="#ac9f9c"/>
<rect x="1268.5" y="235.7" width="1.6" height="5.6" fill="#ac9f9c"/>
<rect x="1265.6" y="233.7" width="5.0" height="1" fill="#a79c9a"/>
<rect x="1265.9" y="258.1" width="1.6" height="6.2" fill="#ac9f9c"/>
<rect x="1268.5" y="258.1" width="1.6" height="6.2" fill="#ac9f9c"/>
<rect x="1265.6" y="256.1" width="5.0" height="1" fill="#a79c9a"/>
<rect x="1278.6" y="212.9" width="1.8" height="8.9" fill="#ac9f9c"/>
<rect x="1281.5" y="212.9" width="1.8" height="8.9" fill="#ac9f9c"/>
<rect x="1278.1" y="210.9" width="5.8" height="1" fill="#a79c9a"/>
<rect x="1278.6" y="238.1" width="1.8" height="5.9" fill="#ac9f9c"/>
<rect x="1281.5" y="238.1" width="1.8" height="5.9" fill="#ac9f9c"/>
<rect x="1278.1" y="236.1" width="5.8" height="1" fill="#a79c9a"/>
<rect x="1278.6" y="261.2" width="1.8" height="6.5" fill="#ac9f9c"/>
<rect x="1281.5" y="261.2" width="1.8" height="6.5" fill="#ac9f9c"/>
<rect x="1278.1" y="259.2" width="5.8" height="1" fill="#a79c9a"/>
<rect x="1289.8" y="214.4" width="1.5" height="9.2" fill="#ac9f9c"/>
<rect x="1292.2" y="214.4" width="1.5" height="9.2" fill="#ac9f9c"/>
<rect x="1289.4" y="212.4" width="4.8" height="1" fill="#a79c9a"/>
<rect x="1289.8" y="240.2" width="1.5" height="6.1" fill="#ac9f9c"/>
<rect x="1292.2" y="240.2" width="1.5" height="6.1" fill="#ac9f9c"/>
<rect x="1289.4" y="238.2" width="4.8" height="1" fill="#a79c9a"/>
<rect x="1289.8" y="263.8" width="1.5" height="6.8" fill="#ac9f9c"/>
<rect x="1292.2" y="263.8" width="1.5" height="6.8" fill="#ac9f9c"/>
<rect x="1289.4" y="261.8" width="4.8" height="1" fill="#a79c9a"/>
<rect x="1301.5" y="215.7" width="1.4" height="9.5" fill="#b9aaa6"/>
<rect x="1301.5" y="242.0" width="1.4" height="6.3" fill="#b9aaa6"/>
<rect x="1301.5" y="266.1" width="1.4" height="7.0" fill="#b9aaa6"/>
<rect x="1305.3" y="216.5" width="1.9" height="9.7" fill="#ac9f9c"/>
<rect x="1308.4" y="216.5" width="1.9" height="9.7" fill="#ac9f9c"/>
<rect x="1304.9" y="214.5" width="6.0" height="1" fill="#a79c9a"/>
<rect x="1305.3" y="243.3" width="1.9" height="6.4" fill="#ac9f9c"/>
<rect x="1308.4" y="243.3" width="1.9" height="6.4" fill="#ac9f9c"/>
<rect x="1304.9" y="241.3" width="6.0" height="1" fill="#a79c9a"/>
<rect x="1305.3" y="267.7" width="1.9" height="7.2" fill="#ac9f9c"/>
<rect x="1308.4" y="267.7" width="1.9" height="7.2" fill="#ac9f9c"/>
<rect x="1304.9" y="265.7" width="6.0" height="1" fill="#a79c9a"/>
<rect x="1318.1" y="218.1" width="1.0" height="10.0" fill="#ac9f9c"/>
<rect x="1319.7" y="218.1" width="1.0" height="10.0" fill="#ac9f9c"/>
<rect x="1317.9" y="216.1" width="3.1" height="1" fill="#a79c9a"/>
<rect x="1318.1" y="245.5" width="1.0" height="6.7" fill="#ac9f9c"/>
<rect x="1319.7" y="245.5" width="1.0" height="6.7" fill="#ac9f9c"/>
<rect x="1317.9" y="243.5" width="3.1" height="1" fill="#a79c9a"/>
<rect x="1318.1" y="270.5" width="1.0" height="7.4" fill="#ac9f9c"/>
<rect x="1319.7" y="270.5" width="1.0" height="7.4" fill="#ac9f9c"/>
<rect x="1317.9" y="268.5" width="3.1" height="1" fill="#a79c9a"/>
<rect x="1328.1" y="219.6" width="2.0" height="10.4" fill="#ac9f9c"/>
<rect x="1331.4" y="219.6" width="2.0" height="10.4" fill="#ac9f9c"/>
<rect x="1327.6" y="217.6" width="6.5" height="1" fill="#a79c9a"/>
<rect x="1328.1" y="247.7" width="2.0" height="6.9" fill="#ac9f9c"/>
<rect x="1331.4" y="247.7" width="2.0" height="6.9" fill="#ac9f9c"/>
<rect x="1327.6" y="245.7" width="6.5" height="1" fill="#a79c9a"/>
<rect x="1328.1" y="273.3" width="2.0" height="7.7" fill="#ac9f9c"/>
<rect x="1331.4" y="273.3" width="2.0" height="7.7" fill="#ac9f9c"/>
<rect x="1327.6" y="271.3" width="6.5" height="1" fill="#a79c9a"/>
<rect x="1351.4" y="222.9" width="2.4" height="11.1" fill="#ac9f9c"/>
<rect x="1355.4" y="222.9" width="2.4" height="11.1" fill="#ac9f9c"/>
<rect x="1350.9" y="220.9" width="7.7" height="1" fill="#a79c9a"/>
<rect x="1351.4" y="252.3" width="2.4" height="7.4" fill="#ac9f9c"/>
<rect x="1355.4" y="252.3" width="2.4" height="7.4" fill="#ac9f9c"/>
<rect x="1350.9" y="250.3" width="7.7" height="1" fill="#a79c9a"/>
<rect x="1351.4" y="279.0" width="2.4" height="8.3" fill="#ac9f9c"/>
<rect x="1355.4" y="279.0" width="2.4" height="8.3" fill="#ac9f9c"/>
<rect x="1350.9" y="277.0" width="7.7" height="1" fill="#a79c9a"/>
<rect x="1366.8" y="224.7" width="1.1" height="11.5" fill="#ac9f9c"/>
<rect x="1368.5" y="224.7" width="1.1" height="11.5" fill="#ac9f9c"/>
<rect x="1366.5" y="222.7" width="3.4" height="1" fill="#a79c9a"/>
<rect x="1366.8" y="254.9" width="1.1" height="7.7" fill="#ac9f9c"/>
<rect x="1368.5" y="254.9" width="1.1" height="7.7" fill="#ac9f9c"/>
<rect x="1366.5" y="252.9" width="3.4" height="1" fill="#a79c9a"/>
<rect x="1366.8" y="282.3" width="1.1" height="8.6" fill="#ac9f9c"/>
<rect x="1368.5" y="282.3" width="1.1" height="8.6" fill="#ac9f9c"/>
<rect x="1366.5" y="280.3" width="3.4" height="1" fill="#a79c9a"/>
<polygon points="1323.8,166.2 1410.6,168.8 1410.6,200.0 1385.0,204.0 1323.8,198.8" fill="#d8704a"/>
<path d="M1326.500 175.600l82.500 4.100M1326.300 166.500v32.400M1323.750 166.250l86.850 2.500M1323.750 198.750l61.250 5.250l25.600-4" stroke="#5a2411" stroke-width=".800" fill="none"/>
<rect x="1329" y="190" width="8" height="8.500" fill="#c98a78"/>
<polygon points="1323.8,166.2 1416.0,162.5 1505.0,162.5 1410.6,168.8" fill="#f08457"/>
<polygon points="1385.0,204.0 1410.6,200.0 1410.6,168.8 1505.0,162.5 1505.0,180.6 1511.0,180.6 1509.5,234.0 1383.0,297.0" fill="#f58a5d"/>
<polygon points="1413.0,180.1 1419.4,179.2 1419.4,204.2 1413.0,206.2" fill="#3a3d42"/>
<polygon points="1413.0,192.6 1419.4,190.2 1419.4,204.2 1413.0,206.2" fill="#1e2023"/>
<polygon points="1421.9,179.5 1428.7,178.6 1428.7,201.2 1421.9,203.3" fill="#3a3d42"/>
<polygon points="1421.9,192.0 1428.7,189.6 1428.7,201.2 1421.9,203.3" fill="#1e2023"/>
<polygon points="1430.6,178.9 1436.9,178.0 1436.9,198.5 1430.6,200.5" fill="#3a3d42"/>
<polygon points="1430.6,191.4 1436.9,189.0 1436.9,198.5 1430.6,200.5" fill="#1e2023"/>
<polygon points="1422.0,209.3 1427.0,207.7 1427.0,225.7 1422.0,227.3" fill="#54565c"/>
<polygon points="1422.0,234.3 1427.0,232.7 1427.0,248.0 1422.0,250.0" fill="#2b2e31"/>
<polygon points="1432.5,205.9 1436.0,204.8 1436.0,222.8 1432.5,223.9" fill="#54565c"/>
<polygon points="1432.5,230.9 1436.0,229.8 1436.0,244.4 1432.5,245.8" fill="#2b2e31"/>
<polygon points="1441.0,168.9 1444.6,168.7 1444.6,221.0 1441.0,222.2" fill="#3c3f46"/>
<polygon points="1440.6,227.2 1445.1,226.0 1445.1,263.2 1440.6,265.0" fill="#463634"/>
<polygon points="1447.3,168.5 1450.8,168.3 1450.8,219.0 1447.3,220.2" fill="#4a4046"/>
<polygon points="1446.9,225.2 1451.3,224.0 1451.3,260.1 1446.9,261.9" fill="#463634"/>
<polygon points="1453.4,168.1 1456.8,167.9 1456.8,217.1 1453.4,218.2" fill="#3c3f46"/>
<polygon points="1453.0,223.2 1457.3,222.1 1457.3,257.1 1453.0,258.8" fill="#463634"/>
<polygon points="1459.4,167.7 1462.6,167.5 1462.6,215.2 1459.4,216.3" fill="#4a4046"/>
<polygon points="1459.0,221.3 1463.1,220.2 1463.1,254.2 1459.0,255.8" fill="#463634"/>
<polygon points="1465.1,167.3 1468.3,167.1 1468.3,213.4 1465.1,214.4" fill="#3c3f46"/>
<polygon points="1464.7,219.4 1468.8,218.4 1468.8,251.3 1464.7,252.9" fill="#463634"/>
<polygon points="1470.7,167.0 1473.8,166.8 1473.8,211.6 1470.7,212.6" fill="#4a4046"/>
<polygon points="1470.3,217.6 1474.3,216.6 1474.3,248.6 1470.3,250.1" fill="#463634"/>
<polygon points="1476.1,166.6 1479.2,166.4 1479.2,209.9 1476.1,210.8" fill="#3c3f46"/>
<polygon points="1475.7,215.8 1479.7,214.9 1479.7,245.9 1475.7,247.4" fill="#463634"/>
<polygon points="1481.4,166.3 1484.3,166.1 1484.3,208.2 1481.4,209.1" fill="#4a4046"/>
<polygon points="1481.0,214.1 1484.8,213.2 1484.8,243.3 1481.0,244.8" fill="#463634"/>
<polygon points="1486.5,165.9 1489.4,165.7 1489.4,206.6 1486.5,207.5" fill="#3c3f46"/>
<polygon points="1486.1,212.5 1489.9,211.6 1489.9,240.8 1486.1,242.2" fill="#463634"/>
<polygon points="1492.0,172.0 1494.6,171.8 1494.6,204.9 1492.0,205.7" fill="#54362f"/>
<polygon points="1492.0,210.7 1494.6,209.9 1494.6,238.2 1492.0,239.5" fill="#54362f"/>
<polygon points="1496.5,172.0 1499.1,171.8 1499.1,203.4 1496.5,204.3" fill="#54362f"/>
<polygon points="1496.5,209.3 1499.1,208.4 1499.1,236.0 1496.5,237.2" fill="#54362f"/>
<polygon points="1501.0,172.0 1503.6,171.8 1503.6,202.0 1501.0,202.8" fill="#54362f"/>
<polygon points="1501.0,207.8 1503.6,207.0 1503.6,233.7 1501.0,235.0" fill="#54362f"/>
<polygon points="1505.0,180.6 1511.0,180.6 1509.5,234.0 1505.0,236.0" fill="#f0875a"/>
<polygon points="1398.0,266.6 1400.5,265.6 1400.5,286.2 1398.0,287.5" fill="#7a4a3a"/>
<polygon points="1404.5,264.0 1407.0,263.0 1407.0,283.0 1404.5,284.2" fill="#7a4a3a"/>
<polygon points="1412.0,260.5 1414.6,259.5 1414.6,279.2 1412.0,280.5" fill="#4b3a38"/>
<polygon points="1417.6,258.3 1420.2,257.2 1420.2,276.4 1417.6,277.7" fill="#4b3a38"/>
<polygon points="1423.2,256.0 1425.8,255.0 1425.8,273.6 1423.2,274.9" fill="#4b3a38"/>
<polygon points="1428.8,253.8 1431.4,252.7 1431.4,270.8 1428.8,272.1" fill="#4b3a38"/>
<polygon points="1434.4,251.5 1437.0,250.5 1437.0,268.0 1434.4,269.3" fill="#4b3a38"/>
<polygon points="1440.0,249.3 1442.6,248.3 1442.6,265.2 1440.0,266.5" fill="#4b3a38"/>
<polygon points="1445.6,247.1 1448.2,246.0 1448.2,262.4 1445.6,263.7" fill="#4b3a38"/>
<path d="M1386 218.300l25-6.200M1385 204v93M1410.600 168.750v40" stroke="#5a2411" stroke-width=".800" fill="none"/>
<path d="M1372 217.200l13 1.300" stroke="#5a2411" stroke-width=".700" fill="none"/>
<polygon points="1452.0,233.0 1473.6,224.0 1473.6,251.0 1452.0,264.0" fill="#f58a5d"/>
<polygon points="1453.5,236.0 1464.5,231.0 1464.5,266.0 1453.5,271.0" fill="#2a2c2f"/>
<polygon points="1466.0,236.0 1468.5,235.0 1468.5,258.0 1466.0,259.0" fill="#54362f"/>
<polygon points="1470.0,234.0 1472.5,233.0 1472.5,255.0 1470.0,256.0" fill="#54362f"/>
<rect x="1457.800" y="257.500" width="5.200" height="11" fill="#efece8"/>
<rect x="1456" y="268.500" width="9" height="2.500" fill="#b9b9b6"/>
<polygon points="1473.6,224.0 1509.5,208.0 1509.5,234.0 1473.6,251.0" fill="#f58a5d"/>
<rect x="1476.0" y="214.9" width="2" height="36.6" fill="#54362f"/>
<rect x="1480.0" y="213.6" width="2" height="35.9" fill="#54362f"/>
<rect x="1484.0" y="212.3" width="2" height="35.2" fill="#54362f"/>
<rect x="1488.0" y="211.0" width="2" height="34.5" fill="#54362f"/>
<rect x="1492.0" y="209.7" width="2" height="33.8" fill="#54362f"/>
<rect x="1496.0" y="208.4" width="2" height="33.1" fill="#54362f"/>
<rect x="1500.0" y="207.2" width="2" height="32.3" fill="#54362f"/>
<polygon points="1179.7,243.0 1383.0,297.0 1383.0,321.5 1181.0,258.6" fill="#4b4f51"/>
<polygon points="1179.7,243.0 1383.0,297.0 1383.0,300.0 1179.9,246.0" fill="#5f6365"/>
<polygon points="1383.0,297.0 1451.8,263.8 1451.8,280.0 1383.0,321.5" fill="#4f5355"/>
<polygon points="1473.6,251.0 1508.0,233.0 1508.0,245.3 1473.6,265.4" fill="#4f5355"/>
<path d="M1383 297v24.500" stroke="#222" stroke-width="1"/>
<path d="M1181 258.600l202 62.900l68.800-41.500M1473.600 265.400l34.400-20.100" stroke="#2a2a2a" stroke-width="1" fill="none"/>
<polygon points="1198.0,251.0 1211.0,251.5 1214.0,256.5 1204.0,260.5" fill="#606365"/>
<polygon points="1400.0,290.0 1420.0,270.0 1432.0,268.0 1410.0,296.0" fill="#74777a"/>
<polygon points="1487.0,247.0 1497.0,236.5 1503.0,236.0 1492.0,250.0" fill="#74777a"/>
<circle cx="1300.5" cy="280.8" r="1.500" fill="#1c1c1c"/>
<circle cx="1312.5" cy="285.2" r="1.500" fill="#1c1c1c"/>
<circle cx="1334.0" cy="291.0" r="1.500" fill="#1c1c1c"/>
<circle cx="1372.5" cy="302.0" r="1.500" fill="#1c1c1c"/>
<circle cx="1393.5" cy="298.0" r="1.500" fill="#1c1c1c"/>
<circle cx="1371.0" cy="301.6" r="1.500" fill="#1c1c1c"/>
<polygon points="1177.5,205.6 1385.0,240.0 1385.0,243.2 1177.5,208.8" fill="#f4f3ee"/>
<path d="M1177.5 208.8L1385.0 243.2" stroke="#8a8a86" stroke-width=".800"/>
<polygon points="1385.0,240.0 1511.0,199.4 1511.0,202.6 1385.0,243.2" fill="#f4f3ee"/>
<path d="M1385.0 243.2L1511.0 202.6" stroke="#8a8a86" stroke-width=".800"/>
<polygon points="1178.0,223.0 1205.0,228.8 1205.0,231.4 1178.0,225.6" fill="#f4f3ee"/>
<path d="M1178.0 225.6L1205.0 231.4" stroke="#8a8a86" stroke-width=".800"/>
<polygon points="1217.0,231.3 1383.5,266.6 1383.5,269.8 1217.0,234.5" fill="#f4f3ee"/>
<path d="M1217.0 234.5L1383.5 269.8" stroke="#8a8a86" stroke-width=".800"/>
<polygon points="1383.5,266.6 1398.0,260.8 1398.0,264.0 1383.5,269.8" fill="#f4f3ee"/>
<path d="M1383.5 269.8L1398.0 264.0" stroke="#8a8a86" stroke-width=".800"/>
<polygon points="1424.0,250.4 1511.0,215.6 1511.0,218.3 1424.0,253.1" fill="#f4f3ee"/>
<path d="M1424.0 253.1L1511.0 218.3" stroke="#8a8a86" stroke-width=".800"/>
<polygon points="1398.7,259.6 1425.3,251.6 1425.3,255.6 1398.7,264.4" fill="#2c2e30"/>
<polygon points="1398.7,259.6 1425.3,251.6 1425.3,252.8 1398.7,260.8" fill="#cfcfcf"/>
<polygon points="1204.0,227.4 1217.0,230.0 1217.0,233.6 1204.0,231.0" fill="#2c2e30"/>
<polygon points="1482.0,227.5 1498.0,220.8 1498.0,224.2 1482.0,231.0" fill="#2c2e30"/>
<path d="M1176 183.800l209 20.200M1176 183.800l3.700 59.200M1176 183.800l136.500-8.200M1410.600 168.750l94.400-6.250v18.100h6l-1.500 53.400" stroke="#5a2411" stroke-width=".800" fill="none"/>
<path d="M1344.300 217.600v-8" stroke="#2020e0" stroke-width="1.100"/><path d="M1344.300 217.600l-5.500 1.200" stroke="#e02020" stroke-width="1.100"/><path d="M1344.300 217.600l6 1" stroke="#20c020" stroke-width="1.100"/>
</svg>
</section>

<!-- ======= BOTTOM PANEL ======= -->
<section id="bottompanel">
  <div class="abs" style="left:404px;top:6px;width:41px;height:2px;background:#3a95b5"></div>
  <span class="t" id="tColl" style="font-size:14px;color:#e6e6e6">Коллизии (количество: 0)</span>
  <svg style="left:0;top:0" width="846" height="40" viewBox="941 424 846 40">
  <g class="fl">
    <rect x="954.800" y="438.200" width="12.700" height="2"/><rect x="954.800" y="442.600" width="12.700" height="2"/><rect x="954.800" y="447" width="8.700" height="2"/>
    <path d="M965.600 446l4.700 3-4.700 3z"/>
  </g>
  <!-- overlap squares -->
  <g class="ic" stroke-width="1.700" stroke-linecap="round" stroke-linejoin="round">
    <path d="M1622.500 446.800h-2.700q-2 0-2-2v-7q0-2 2-2h7q2 0 2 2v2.700"/>
    <rect x="1622.800" y="440.800" width="11.200" height="11" rx="2"/>
  </g>
  <!-- expand -->
  <g class="fl">
    <rect x="1654" y="437.400" width="14" height="1.900"/><rect x="1654" y="452.100" width="14" height="1.900"/>
    <rect x="1660.200" y="442.500" width="1.700" height="6.500"/>
    <path d="M1657.700 443.800l3.300-3.500 3.300 3.500zM1657.700 447.600l3.300 3.500 3.300-3.500z"/>
  </g>
  <!-- collapse -->
  <g class="fl">
    <rect x="1688" y="443.300" width="14" height="1.500"/><rect x="1688" y="445.800" width="14" height="1.500"/>
    <rect x="1694.200" y="436" width="1.700" height="4"/><rect x="1694.200" y="450.600" width="1.700" height="4"/>
    <path d="M1691.700 438.800l3.300 3.500 3.300-3.500zM1691.700 451.800l3.300-3.500 3.300 3.500z"/>
  </g>
  <!-- gear -->
  <g transform="translate(1718.880 434.380) scale(.86)" class="fl">
    <path d="M19.140 12.940c.04-.3.060-.61.060-.94 0-.32-.02-.64-.07-.94l2.030-1.580c.18-.14.230-.41.120-.61l-1.920-3.320c-.12-.22-.37-.29-.59-.22l-2.390.96c-.5-.38-1.030-.7-1.620-.94l-.36-2.540c-.04-.24-.24-.41-.48-.41h-3.840c-.24 0-.43.170-.47.410l-.36 2.540c-.59.240-1.130.57-1.620.94l-2.390-.96c-.22-.08-.47 0-.59.220L2.740 8.870c-.12.210-.08.470.12.610l2.030 1.580c-.05.300-.09.630-.09.940s.02.640.07.940l-2.030 1.580c-.18.140-.23.410-.12.610l1.920 3.320c.12.220.37.290.59.220l2.390-.96c.5.380 1.030.7 1.620.94l.36 2.540c.05.240.24.410.48.410h3.840c.24 0 .44-.17.470-.41l.36-2.540c.59-.24 1.130-.56 1.620-.94l2.390.96c.22.080.47 0 .59-.22l1.920-3.320c.12-.22.070-.47-.12-.61l-2.010-1.580zM12 15.600c-1.980 0-3.600-1.620-3.600-3.600s1.620-3.600 3.600-3.600 3.600 1.620 3.600 3.600-1.620 3.600-3.600 3.600z"/>
  </g>
  <!-- chevron -->
  <path d="M1758.600 443.500l4.400 4.600 4.400-4.600" class="ic" stroke-width="1.900" stroke-linecap="butt" stroke-linejoin="miter"/>
</svg>

  <div class="abs" style="left:0;top:37px;width:846px;height:342px;background:#fff"></div>
  <div class="abs" style="left:0;top:68px;width:60px;height:1px;background:#e0e0e0"></div>
  <div class="abs" style="left:18.400px;top:45.600px;width:15px;height:15px;border:2px solid #3a95b5;border-radius:3px;background:#fff"></div>
  <div id="thead">
    <div class="cdiv" style="left:90px"></div>
    <div class="cdiv" style="left:376px"></div>
    <div class="cdiv" style="left:568px"></div>
  </div>
  <span class="t th" id="h1">Статус</span>
  <span class="t th" id="h2">Элемент (Модель A)</span>
  <span class="t th" id="h3">Элемент (Модель B)</span>
  <span class="t th" id="h4">GUID элемента (Модель A)</span>
  <span class="t" id="tNoData" style="font-size:14px;color:#9e9e9e">Отсутствуют данные</span>
  <div class="abs" style="left:0;top:379px;width:846px;height:8px;background:#696969"></div>
  <div class="abs" style="left:0;top:379px;width:438px;height:8px;background:#3c94b3"></div>
</section>

<!-- ======= RIGHT BAR ======= -->
<aside id="rightbar">
  <div class="hdiv" style="top:92px"></div>
  <div class="hdiv" style="top:361.400px"></div>
  <div class="hdiv" style="top:410.200px"></div>
  <div class="hdiv" style="top:591.400px"></div>
  <div class="hdiv" style="top:683.500px"></div>
  <div class="rb" style="top:599.500px"></div>
  <div class="rb" style="top:644px"></div>
  <svg style="left:0;top:0" width="36" height="776" viewBox="1795 38 36 776">
  <!-- 1 cloud tree -->
  <g class="ic" stroke-width="1.400" stroke-linecap="round" stroke-linejoin="round">
    <path d="M1808.300 66.900h-1.800a5.200 5.200 0 0 1-.900-10.300a7.700 7.700 0 0 1 15.200.200a5.100 5.100 0 0 1-.800 10.100h-2"/>
    <path d="M1813.200 56.600v16.400M1807 61.300l6.200 5.300M1818.200 62.600l-5 4"/>
  </g>
  <!-- 2 screen focus -->
  <g class="ic" stroke-width="1.300" stroke-linecap="butt" stroke-linejoin="miter">
    <path d="M1824.300 101v-7.800h-24.100v17.800h8v2.200h-3.500"/>
    <path d="M1810.400 106.200v-3.600h3.800M1821.800 102.600h3.800v3.600M1825.600 114.500v3.800h-3.800M1814.200 118.300h-3.800v-3.800"/>
  </g>
  <path d="M1818 106l3.900 2.250v4.500l-3.900 2.250-3.900-2.250v-4.500z" class="fl"/>
  <!-- 3 ruler -->
  <rect x="1800.500" y="150.300" width="24.800" height="7.800" class="ic" stroke-width="1.300" stroke-linejoin="miter" stroke-linecap="round"/>
  <path d="M1803.500 158v-3M1806.500 158v-4.500M1809.500 158v-3M1812.500 158v-5M1815.500 158v-3M1818.500 158v-4.500M1821.500 158v-3" stroke="#e0e0e0" stroke-width="1.400" fill="none"/>
  <rect x="1802" y="156" width="22" height="2" class="fl"/>
  <rect x="1799.900" y="159.800" width="26" height="1.900" class="fl"/>
  <!-- 4 section plane -->
  <path d="M1808.300 192.400l9.900-7.500v20.300l-9.900 7.600z" class="fl"/>
  <path d="M1808.300 195.300h-.5l-7.900 5.600h8.400M1818.200 200.900h-1.900l10.100-5.600h-8.200" class="ic" stroke-width="1.200" stroke-linejoin="round" stroke-linecap="round"/>
  <path d="M1818.200 200.900l8.200-5.600" class="ic" stroke-width="1.200" stroke-linecap="round" stroke-linejoin="round"/>
  <!-- 5 cube section -->
  <g class="ic" stroke-width="1.100" stroke-linejoin="miter" stroke-linecap="round">
    <rect x="1801.300" y="237" width="18.200" height="16.800"/>
    <path d="M1801.300 237l5.500-5h18.200v16.800l-5.500 5M1819.500 237l5.500-5M1806.800 232v16.800h18.200M1806.800 248.800l-5.500 5"/>
  </g>
  <path d="M1810.500 237l5.200-4.800v17l-5.200 4.600z" class="fl"/>
  <!-- 6 floor plan -->
  <path d="M1803 275.800h21.800v20h-25.500v-16.300z" class="ic" stroke-width="1.300" stroke-linejoin="miter" stroke-linecap="round"/>
  <path d="M1799.300 279.500h3.700v-3.700" class="ic" stroke-width="1.100" stroke-linecap="round" stroke-linejoin="round"/>
  <path d="M1825.900 277.500v19.300h-25" stroke="#e0e0e0" stroke-width="2" fill="none"/>
  <path d="M1811.200 276v20M1799.500 285.400h25.300" stroke="#e0e0e0" stroke-width="1.200" stroke-dasharray="3 1.500" fill="none"/>
  <path d="M1817.400 295.800v-3.400h7.400" class="ic" stroke-width="1.200" stroke-linecap="round" stroke-linejoin="round"/>
  <!-- 7 target -->
  <circle cx="1812.800" cy="330.700" r="7.700" class="ic" stroke-width="2.300" stroke-linecap="round" stroke-linejoin="round"/>
  <circle cx="1812.800" cy="330.700" r="4" class="fl"/>
  <path d="M1812.800 320v2.500M1812.800 339v2.500M1802 330.700h2.500M1821.200 330.700h2.500" class="ic" stroke-width="2" stroke-linecap="butt" stroke-linejoin="round"/>
  <!-- 8 flag -->
  <circle cx="1812.800" cy="374.700" r="12.600" class="ic" stroke-width="1.200" stroke-linecap="round" stroke-linejoin="round"/>
  <path d="M1807.500 381.600v-12.400q3.300-1.500 6.500 0t6.500 0v7.600q-3.300 1.500-6.500 0t-6.500 0" class="ic" stroke-width="1.400" stroke-linecap="round" stroke-linejoin="round"/>
  <!-- 9 grid -->
  <path d="M1798.300 427.900l29.700-16.700M1798.300 437.800l29.700-16.800M1807.900 416l18.500 9.500M1800.400 422.800l17.500 10.400" class="ic" stroke-width="1.100" stroke-linecap="round" stroke-linejoin="round"/>
  <text x="1797.600" y="421.800" font-size="6" font-weight="bold" fill="#e0e0e0" font-family="Liberation Sans, sans-serif">1</text>
  <text x="1807.800" y="415.200" font-size="6" font-weight="bold" fill="#e0e0e0" font-family="Liberation Sans, sans-serif">2</text>
  <!-- 10 dashed cube -->
  <rect x="1801.500" y="461" width="23.200" height="23.200" fill="none" stroke="#f0f0f0" stroke-width="1.100" stroke-dasharray="2 1.600"/>
  <path d="M1813.100 465.900l5.900 3.400v6.800l-5.900 3.400-5.900-3.400v-6.800zM1807.200 469.300l5.900 3.400 5.900-3.400M1813.100 472.700v6.800" class="ic" stroke-width="1.100" stroke-linecap="round" stroke-linejoin="round"/>
  <!-- 11 dashed eye -->
  <rect x="1801.500" y="505.300" width="23.200" height="23.200" fill="none" stroke="#f0f0f0" stroke-width="1.100" stroke-dasharray="2 1.600"/>
  <path d="M1805.600 517q3.200-4.700 7.500-4.700t7.500 4.700q-3.200 4.700-7.500 4.700t-7.500-4.700z" class="fl"/>
  <circle cx="1813.100" cy="517" r="3.100" fill="#535353"/><circle cx="1813.100" cy="517" r="1.800" class="fl"/>
  <!-- 12 dashed eye off -->
  <rect x="1801.500" y="549.500" width="23.200" height="23.200" fill="none" stroke="#f0f0f0" stroke-width="1.100" stroke-dasharray="2 1.600"/>
  <path d="M1805.600 561.200q3.200-4.700 7.500-4.700t7.500 4.700q-3.200 4.700-7.500 4.700t-7.500-4.700z" class="fl"/>
  <circle cx="1813.100" cy="561.200" r="3.100" fill="#535353"/><circle cx="1813.100" cy="561.200" r="1.800" class="fl"/>
  <path d="M1806.500 554.500l13 13.500" stroke="#535353" stroke-width="3" fill="none"/>
  <path d="M1806 555.300l13 13.500" stroke="#e0e0e0" stroke-width="1.300" fill="none"/>
  <!-- 13 dashed X -->
  <path d="M1810.500 616.700h-9.100v-23.500h23.500v9.600" fill="none" stroke="#f0f0f0" stroke-width="1.100" stroke-dasharray="2 1.600"/>
  <rect x="1810.700" y="603" width="16.300" height="15.800" class="fl"/>
  <path d="M1814.700 606.700l8.500 8.500M1823.200 606.700l-8.500 8.500" stroke="#444" stroke-width="1.400" fill="none"/>
  <!-- 14 cube filled -->
  <path d="M1801.200 644.800l12 2.900-.300 18.100-9.150-6.900z" fill="#e2e2e2"/>
  <path d="M1801.200 644.800l11.100-2.200 12.100 2.200-11.200 2.900z" fill="#9c9c9c" stroke="#e2e2e2" stroke-width="1.100" stroke-linejoin="round"/>
  <path d="M1813.200 647.700l11.200-2.900-1.700 13.200-9.800 7.800z" fill="#858585" stroke="#e2e2e2" stroke-width="1.100" stroke-linejoin="round"/>
  <!-- 15 orbit -->
  <ellipse cx="1812.900" cy="697.900" rx="11.200" ry="5.700" class="ic" stroke-width="2.100"/>
  <ellipse cx="1812.900" cy="697.900" rx="5.500" ry="10.900" class="ic" stroke-width="2.100"/>
  <path d="M1812.900 694.500v3.400l-2.800 3M1812.900 697.900l2.800 3" class="ic" stroke-width=".900" stroke-linecap="round"/>
  <!-- corner triangle -->
  <path d="M1797 802.500l4.300 4.300h-4.300z" class="fl"/>
</svg>

</aside>
<div id="rightedge"><i class="abs" style="left:0;top:607px;width:1px;height:9px;background:#7a4a20"></i><i class="abs" style="left:.300px;top:608.800px;width:1.800px;height:1.400px;background:#e09a48"></i><i class="abs" style="left:.300px;top:614px;width:1.800px;height:1.400px;background:#e09a48"></i></div>

<svg id="arrows" style="left:0;top:0;pointer-events:none" width="1834" height="814" viewBox="0 0 1834 814">
<defs><filter id="ash" x="-20%" y="-20%" width="150%" height="150%"><feDropShadow dx="3" dy="3.200" stdDeviation="1.700" flood-color="#000" flood-opacity=".550"/></filter></defs>
<g fill="#c00000" filter="url(#ash)">
<polygon points="472.6,187.9 478.6,203.2 481.2,197.9 540.2,247.2 541.6,245.4 483.8,194.8 488.6,191.5"/>
<polygon points="469.7,238.3 475.9,253.5 478.4,248.2 528.0,288.7 529.5,286.9 480.9,245.1 485.8,241.7"/>
<polygon points="473.2,306.8 479.4,322.0 481.9,316.7 540.2,364.5 541.6,362.7 484.4,313.6 489.3,310.2"/>
<polygon points="474.8,408.2 479.6,423.9 482.6,418.8 531.0,466.2 532.6,464.6 485.4,416.0 490.5,413.0"/>
</g></svg>
</body>
</html>
